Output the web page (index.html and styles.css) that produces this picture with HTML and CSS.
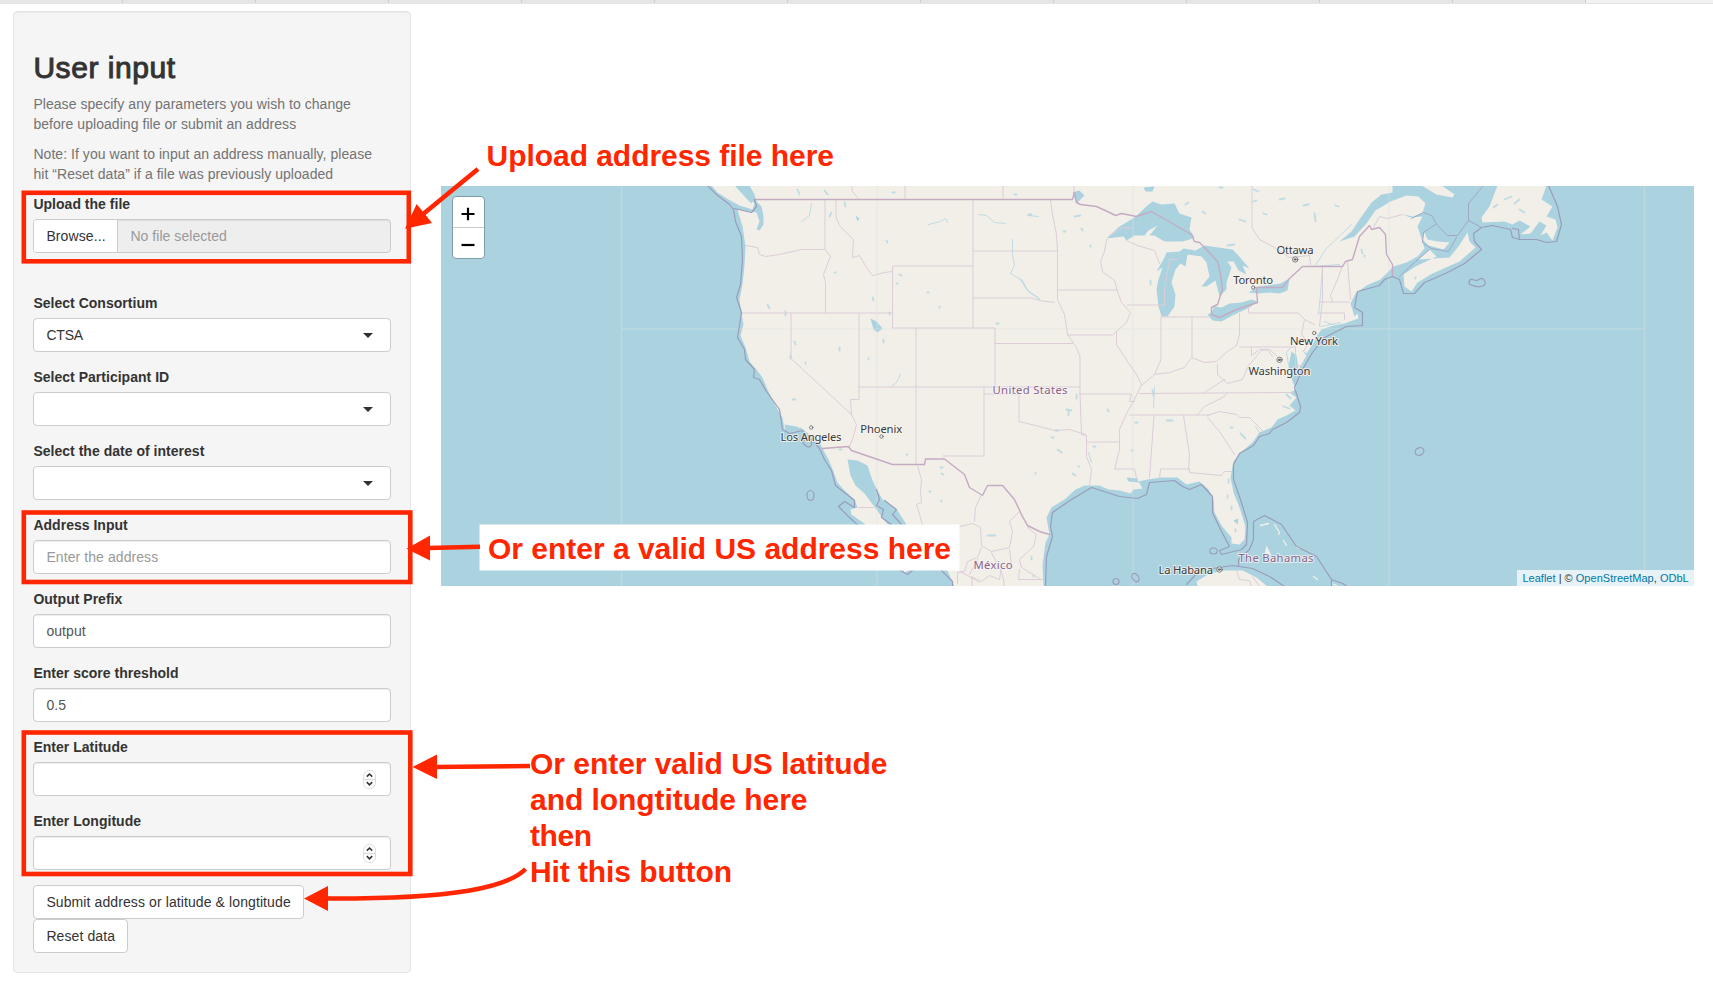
FILE: index.html
```html
<!DOCTYPE html>
<html lang="en">
<head>
<meta charset="utf-8">
<title>User input</title>
<link rel="stylesheet" href="styles.css">
</head>
<body>
<div class="tabs"><i></i><i></i><i></i><i></i><i></i><i></i><i></i><i></i><i></i><i></i><i></i><i></i><b></b></div>
<div class="page">
  <form class="well">
    <h2>User input</h2>
    <p class="help">Please specify any parameters you wish to change<br>before uploading file or submit an address</p>
    <p class="help">Note: If you want to input an address manually, please<br>hit “Reset data” if a file was previously uploaded</p>
    <div class="group file">
      <label>Upload the file</label>
      <div class="filebox"><span class="browse">Browse...</span><span class="filename">No file selected</span></div>
    </div>
    <div class="group"><label>Select Consortium</label><div class="control select"><span class="dark">CTSA</span></div></div>
    <div class="group"><label>Select Participant ID</label><div class="control select"></div></div>
    <div class="group"><label>Select the date of interest</label><div class="control select"></div></div>
    <div class="group"><label>Address Input</label><div class="control"><span class="placeholder">Enter the address</span></div></div>
    <div class="group"><label>Output Prefix</label><div class="control">output</div></div>
    <div class="group"><label>Enter score threshold</label><div class="control">0.5</div></div>
    <div class="group"><label>Enter Latitude</label><div class="control number"><svg class="spin" viewBox="0 0 13 19"><rect x=".5" y=".5" width="12" height="18" rx="5.5"/><path class="split" d="M1 9.5h11"/><path d="M3.8 6.6 6.5 4l2.7 2.6M3.8 12.2l2.7 2.6 2.7-2.6"/></svg></div></div>
    <div class="group"><label>Enter Longitude</label><div class="control number"><svg class="spin" viewBox="0 0 13 19"><rect x=".5" y=".5" width="12" height="18" rx="5.5"/><path class="split" d="M1 9.5h11"/><path d="M3.8 6.6 6.5 4l2.7 2.6M3.8 12.2l2.7 2.6 2.7-2.6"/></svg></div></div>
    <div class="buttons"><span class="btn submit">Submit address or latitude &amp; longtitude</span><span class="btn">Reset data</span></div>
  </form>

  <div class="map">
    <svg class="tiles" viewBox="441.5 186.5 1253 400.5" preserveAspectRatio="none">
      <g class="land">
        <path d="M712 186 718 193 729 200 740 206 753 210 755 204 749 198 742 192 735 186Z"/>
        <path d="M750 186 755 195 757 202 762 207 764 216 764 225 760 231 757 230 760 222 757 213 750 212 738 210 741 220 744 233 746 247 745 266 743 285 740 300 742 315 744 325 741 336 746 348 750 362 757 370 763 378 768 390 777 408 783 418 785 430 795 432 801 428 810 435 819 440 823 449 829 460 834 472 838 483 845 491 855 500 858 508 851 510 852 515 862 522 880 535 905 573 911 570 900 548 888 525 882 517 874 506 865 494 856 486 851 476 848 460 858 461 868 466 873 481 878 491 883 500 898 511 907 525 935 555 948 571 955 587H1044L1043 565 1046 543 1050 535 1047 518 1052 508 1065 500 1076 490 1085 486 1100 486 1109 490 1120 491 1131 494 1134 490 1143 489 1139 482 1148 480 1162 478 1178 478 1187 485 1200 482 1209 490 1214 500 1215 513 1222 526 1232 538 1232 544 1240 545 1245 540 1246 527 1240 508 1234 493 1231 478 1234 462 1240 454 1253 443 1260 433 1272 428 1278 420 1287 416 1296 411 1290 406 1297 398 1290 393 1297 390 1293 382 1289 367 1292 352 1297 356 1299 370 1307 356 1302 350 1307 354 1313 345 1317 337 1322 330 1334 326 1345 324 1359 319 1358 314 1355 317 1351 304 1356 294 1367 286 1381 280 1394 267 1407 263 1418 257 1425 249 1421 236 1418 227 1423 217 1411 218 1403 215 1414 217 1423 213 1426 204 1419 197 1407 196 1391 202 1376 211 1367 224 1355 237 1340 242 1352 232 1362 217 1372 203 1382 195 1393 193 1393 186Z"/>
        <path d="M1430 250 1419 260 1450 258 1459 247 1468 233 1470 242 1476 248 1460 262 1433 274 1418 283 1412 292 1405 287 1404 275 1416 267 1437 257ZM1425 233 1428 240 1438 242 1450 243 1444 250 1429 246 1423 240ZM1498 186 1490 207 1482 218 1483 223 1505 222 1513 225 1520 221 1531 227 1521 235 1531 234 1540 222 1547 226 1541 236 1547 233 1553 241 1558 228 1556 220 1547 217 1553 207 1542 200 1547 186ZM1422 186 1437 195 1453 198 1455 195 1442 186Z"/>
        <path d="M1198 587 1197 582 1210 574 1225 571 1243 571 1257 578 1268 587ZM1267 546 1272 556 1265 555Z"/>
        <path class="keys" d="M1261 526l8-2M1275 525l5 8-1 2M1284 541l3 5M1297 548l3 1M1314 577l4 3M1332 584l5 2"/>
      </g>
      <g class="water">
        <path d="M1107 239 1120 227 1135 218 1148 206 1153 202 1162 205 1175 204 1180 214 1192 218 1190 230 1195 238 1190 240 1183 242 1165 242 1155 236 1150 236 1158 226 1149 231 1145 236 1135 236 1127 241 1124 237Z"/>
        <path d="M1165 258 1157 272 1163 268 1159 280 1157 290 1159 307 1162 317 1168 317 1175 307 1176 295 1172 283 1176 270 1181 264 1186 267 1188 255 1202 257 1207 263 1210 277 1202 287 1207 287 1216 281 1220 297 1227 290 1227 283 1232 268 1228 262 1234 262 1239 271 1247 275 1243 266 1250 269 1238 255 1233 250 1205 246 1196 251 1184 249 1180 252 1167 253Z"/>
        <path d="M1208 315 1213 321 1222 322 1233 316 1250 308 1258 302 1252 300 1242 303 1230 304 1222 308 1215 307 1212 313ZM1249 293 1259 287 1281 284 1290 279 1288 291 1280 294 1270 293 1259 294Z"/>
        <path d="M871 319 877 322 883 329 878 333 874 330ZM736 187 747 190 755 198 752 204 746 198ZM856 216 860 219 858 222ZM1073 193 1080 191 1085 196 1077 204ZM1234 521 1239 519 1238 525ZM785 425 797 427 804 430 798 432 786 431ZM1127 478 1138 479 1139 483 1129 482ZM1144 188 1155 187 1153 192 1146 192Z"/>
        <path class="river" d="M1013 240v15l2 11-4 8 12 7 5 10 12 8M929 225l12-3 5-3 2 4M979 215l8 1 8 7 11 1M1028 216l11 1M1020 279l8 12 12 9M802 222l8-6 2-12M892 387l5-4 4-8M1155 388l-1 20M1323 267l-2 28-2 20M1340 265l-25 2 12-18 25-24M1289 365l-2-12 4-5M1260 433l-4-6M1092 463l-3-10M1321 327l20-4M1325 322l8 3"/>
        <path class="lakes" d="M832 213l-2 4M768 305l2 4M786 312v4M795 342l1 3M900 275l2 1M897 284h1M873 298l1 3M890 313v2M884 340v3M869 359v1M806 363v1M793 400h3M791 356v3M887 241l1 2M835 273h1M840 348v3M928 293h1M940 307v1M997 324h2M1075 217l6-1M1082 229l1 2M1091 246v1M1064 232h2M1151 281v4M1254 202l3-1M1264 214l3 1M1280 200l5-1M1304 206l5-1M1336 206l3 1M1315 214l1 8M1240 220l6 2M1228 246l7-1M1203 212l3 2M1186 205l3-2M1254 190l5 2M1220 188h3M893 193h2M1029 215h3M1015 195h2M825 191l3 4M845 203l1 4M798 190l2 5M741 223l2 6M1069 412v4M1056 431h3M1058 450l4 3M1073 474l3 2M1079 467h1M1036 473v1M1052 438h2M1132 451h1M1136 423h2M1153 391l1 5M1231 428h2M1241 434l5 5M1229 480v3M1228 496v2M1232 507v3M1236 530v2M941 468h2M942 474l2 1M942 501v1M930 492h1M988 536h8M1032 557v3M1034 576v1M907 455h1M840 450h2M1167 421h6M1077 395v4M1067 410l5 1M1094 447h2M1108 410l1 2M1365 256v1M1416 278v1M1505 200l7-3M1520 200l-5 4M1520 210l5 3M1498 205l-4 3M1362 250l1 4M1290 409l-6-2M1291 399l-4-4"/>
      </g>
      <g class="seams"><path d="M622 186V587M877.5 186V587M1133.5 186V587M1389.5 186V587M1645 186V587M622 329.3H1645"/></g>
      <g class="states">
        <path d="M746 246 758 248 760 255 766 257 780 255 802 250H825.5M825.500 200.500V250L831 257 824 275 826 283V313.500M742 313.500H893.500M836.500 200.500V217L840 226 854 240 853 258 860 256 867 268 873 276 885 273 893 272M893.500 266.500H973.500V328.500H893.500ZM973.500 200.500V266M973.500 251.500H1058M973.500 298.500H1032L1040 301 1055 303M916.500 328.500V465M973.500 328.500H995.500V387.500M859.500 313.500V400L851 400 852 415 857 425 853 440 850 447M791.500 313.500V359L852 415M859.500 387.500H1080M984.500 387.500V456.500H943.500M984.500 394.500H1019.500V422L1040 427 1055 431 1070 430 1086 435M995.500 344H1073M1051 200.500 1053 215 1057 235 1058 252V300L1065 315 1068 335 1077 348 1080.500 357V394L1082 435 1087 436V457L1092 470 1090 486M1058 290.500H1118M1068 335.500H1113L1117 332M1080 394.500H1132L1130 402H1135M1087 442.500H1119M1107 240 1105 252 1101 262 1103 272 1115 281 1118 292 1122 303 1131 313 1127 323 1117 332 1117 345 1128 362 1137 375 1142 385 1135 400 1128 412 1120 430V450L1115 469.500H1135L1137 479M1128 305.500H1166M1127 241 1138 246 1155 251 1160 264M1161.500 317.500V360L1155 375M1142 386 1155 375 1170 373 1185 368 1192 358 1205 363 1217 362 1228 352 1237 346 1240 335V314M1192.500 317.500V358M1162 317.500H1210M1240 347.500H1296M1249 308V313.500H1299L1305 320 1302 335 1309 343 1304 352M1305 320 1315 325M1218 365V375L1228 384 1243 380 1249 366 1262 351 1270 350 1277 356M1252 348V356L1260 350 1268 350 1273 357M1140 394 1293 393M1205 393 1225 380M1130 415.500H1210M1198 415 1205 407 1225 397 1228 393M1154.500 416 1150 478M1184 416 1190 455 1189 470M1160 479 1161 469.500H1190V473L1222 476 1225 472H1232M1208 418 1220 432 1235 455M1208 416 1220 412 1237 415 1240 418H1250L1263 431M1323 266V300L1320 327M1320 302.500H1350M1320 313.500H1345V320M1333 302 1331 296 1338 280 1343 266M1348 262 1351 300M1296 348V366H1303M1252.500 186V228L1260 240 1275 248 1290 258 1310 256 1311 265M1074.500 186V195M905.500 186V199M1003.500 186V199M852 186 853 192 859 199M1110 236 1123 228 1134 229M1178 260 1170 260 1165 290 1165 305"/>
        <path d="M918 466 922 480 921 492 922 503 917 505 923 525M859 508H874M960 527 973 524 981 528 982 546 992 552 1010 548 1013 532 1010 522 1020 512 1030 530 1037 535 1034 547 1020 560 1022 568 1040 579M981 497 976 508 975 522M982 548 978 558 968 562 965 572 958 573V584M978 560 970 575M1010 550 1012 565 1002 568 1000 580 990 576 982 582 972 577 973 587M992 553 1003 575 1005 587M1020 570 1019 580 1045 580M961 572 980 583M1237 571 1240 580 1250 581 1252 587M1253 577 1260 587M1374 228 1380 217 1388 219 1403 215"/>
      </g>
      <g class="country">
        <path d="M755 200H1073L1075 193 1077 203 1081 205 1097 207 1110 213 1116 216 1122 214 1137 217 1152 212 1192 235 1195 242 1200 243 1206 249 1218 262 1221 275 1223 290 1218 305 1212 308V315L1220 318 1237 310 1258 303 1257 288H1283L1290 279 1303 267H1343L1346 262 1353 260 1360 237 1370 226 1372 230 1380 228 1386 235 1387 255 1393 265V277M823 449 849 447 852 451 893 465H925L926 459.500H945L965 475 970 488 983 496 988 486 1003 486 1015 500 1022 515 1028 526 1040 532 1050 535"/>
      </g>
      <g class="sea">
        <path d="M708 186 717 195 730 205 734 210 736 222 742 237 743 260 741 285 737 298 742 313 738 338 745 350 746 360 755 370 754 378 760 380 767 392 780 410 783 430 790 434 803 431 806 438 812 440 820 449 825 460 832 471 836 486 855 501 855 508 845 502 839 507 850 518 863 530M735 209 752 213 757 207 755 200M901 571 908 575 914 570M942 571 953 582V587M877 490 880 500 877 506 884 510 882 518 892 525M885 501 897 510 893 515 902 525"/>
        <path d="M1558 207 1562 225 1557 242 1547 243 1537 240H1520L1513 238 1511 230 1493 226 1482 228 1474 234 1475 242 1482 250 1465 264 1450 272 1437 278 1425 283 1415 294 1404 294 1400 280 1393 277 1385 280 1380 286 1358 292 1355 308 1363 313V326L1347 327 1325 338 1313 353 1303 370 1295 388 1301 407 1300 413 1287 423 1273 430 1270 434 1260 437 1254 446 1240 454 1234 465 1234 480 1242 503 1248 523 1247 545 1242 550 1222 555 1220 551 1230 547 1221 530 1213 513 1213 497 1202 485 1190 490 1183 487 1175 481 1150 483 1147 495 1138 499 1120 497 1092 488 1072 500 1053 513 1051 527 1053 537 1047 557 1046 587M1558 207 1549 186M1513 229 1519 230 1520 240M1187 585 1200 571 1233 566 1253 569 1270 577 1285 587M1239 567V560L1250 550 1254 540V522L1265 516 1282 525 1297 547 1317 557 1332 580 1343 584 1348 587M1332 580V587"/>
        <path class="thin" d="M1483 187 1469 204V221L1482 228M1469 221 1458 236H1448L1438 226 1432 216 1424 213 1412 219M1436 225 1424 233 1423 243 1432 249 1449 252 1457 238M1430 250 1415 263 1400 277"/>
        <path d="M1470 281c2-3 4 0 7 0s5-5 8 0-4 7-8 6-9-1-7-6Z"/><ellipse cx="811" cy="496" rx="3.500" ry="5"/><ellipse cx="1420" cy="452" rx="4.500" ry="3.700" transform="rotate(-25 1420 452)"/><ellipse cx="1214" cy="551.500" rx="3.700" ry="3"/><circle cx="1116.500" cy="582" r="3"/><ellipse cx="1136" cy="578" rx="3" ry="4.500" transform="rotate(-35 1136 578)"/><path d="M804 440c3-3 7-1 8 3s-3 6-6 3-4-4-2-6"/>
      </g>
      <g class="dots"><circle cx="811.700" cy="428" r="1.700"/><circle cx="882" cy="437" r="1.700"/><circle cx="1253.700" cy="288" r="1.700"/><circle cx="1314.700" cy="333.500" r="1.700"/><circle cx="1295.700" cy="260" r="2.700"/><circle cx="1280" cy="360.300" r="2.700"/><circle cx="1220" cy="570" r="2.700"/><path d="M1295.200 260h1M1279.500 360.300h1M1219.500 570h1"/></g>
      <g class="places">
        <text x="781" y="441" textLength="61">Los Angeles</text><text x="860.700" y="433" textLength="42">Phoenix</text><text x="1277" y="254" textLength="37">Ottawa</text><text x="1233.700" y="284" textLength="40">Toronto</text><text x="1290.500" y="345.300" textLength="48">New York</text><text x="1249" y="375" textLength="62">Washington</text><text x="1159" y="574.500" textLength="54.500">La Habana</text>
        <g class="nation"><text x="993" y="394.300" textLength="75">United States</text><text x="974" y="569.300" textLength="39">México</text><text x="1239" y="562" textLength="75">The Bahamas</text></g>
      </g>
    </svg>
    <div class="zoom"><span><svg viewBox="0 0 14 14"><path d="M.5 7h13M7 .8v12.400"/></svg></span><span><svg viewBox="0 0 14 14"><path d="M.5 7h13"/></svg></span></div>
    <div class="credit"><a>Leaflet</a> | © <a>OpenStreetMap</a>, <a>ODbL</a></div>
  </div>
</div>

<svg class="notes" viewBox="0 0 1713 983">
  <rect class="plate" x="479.500" y="524.500" width="480" height="46"/>
  <g class="frame"><rect x="23.800" y="192.800" width="385" height="68.500"/><rect x="23.800" y="512.500" width="386.500" height="69.500"/><rect x="23.800" y="732.500" width="386.500" height="141.500"/></g>
  <g class="shaft"><path d="M478 169 422 215M480 546.700 428 548M530 766 435 767M525.500 869C508 887 457 899 326 898.500"/></g>
  <g class="head"><path d="M405 228.700 416.700 204 432 223ZM406.500 548.700 430 535.500V560.500ZM412.500 767 437 754.500V779ZM304 898.500 328 886V911Z"/></g>
  <text x="486.500" y="166.300" textLength="347.500">Upload address file here</text>
  <text x="488" y="558.700" textLength="463">Or enter a valid US address here</text>
  <text x="530" y="774.300" textLength="357.500">Or enter valid US latitude</text>
  <text x="530" y="810" textLength="277.500">and longtitude here</text>
  <text x="530" y="846" textLength="62">then</text>
  <text x="530" y="882" textLength="202">Hit this button</text>
</svg>
</body>
</html>
```
FILE: styles.css
```css
* { box-sizing: border-box; }
body { margin: 0; width: 1713px; height: 983px; overflow: hidden; position: relative; background: #fff; color: #333; font: 14px/20px "Liberation Sans", Arial, sans-serif; }
.tabs { display: flex; height: 4px; background: #e6e6e4; }
.tabs i { width: 133px; height: 3px; border-right: 1px solid #cfcfcd; }
.tabs i:first-child { width: 123px; }
.tabs b { flex: 1; height: 4px; background: #f2f2f1; border-bottom: 1px solid #e2e2e0; }
.page { display: flex; align-items: flex-start; gap: 30px; padding: 7.400px 0 0 13.400px; }
.well { width: 397.500px; height: 962px; margin: 0; padding: 19px; border: 1px solid #e5e5e5; border-radius: 4px; background: #f5f5f5; box-shadow: inset 0 1px 1px rgba(0,0,0,.05); }
h2 { margin: 20px 0 10px; font-size: 30px; line-height: 33px; font-weight: 400; letter-spacing: .55px; -webkit-text-stroke: 1px #333; }
.help { margin: 0 0 10px; color: #737373; white-space: nowrap; letter-spacing: .05px; }
.group { margin-bottom: 15px; }
.group.file { margin-bottom: 40px; }
label { display: block; margin-bottom: 5px; font-weight: 700; letter-spacing: .02px; }
.control { display: flex; align-items: center; justify-content: space-between; height: 34px; padding: 0 12px; border: 1px solid #ccc; border-radius: 4px; background: #fff; box-shadow: inset 0 1px 1px rgba(0,0,0,.075); color: #555; letter-spacing: .08px; }
.dark { color: #333; letter-spacing: -.2px; }
.placeholder { color: #999; }
.select { padding-right: 17px; box-shadow: none; }
.select::after { content: ""; margin-left: auto; border: 5px solid transparent; border-top-color: #333; border-bottom: 0; }
.number { justify-content: flex-end; padding-right: 14px; }
.spin { width: 13px; height: 19px; fill: #fff; stroke: #333; stroke-width: 1.600; }
.spin rect { stroke: #ddd; stroke-width: 1; }
.spin .split { stroke: #ddd; stroke-width: 1.500; }
.filebox { display: flex; height: 34px; border: 1px solid #ccc; border-radius: 4px; background: #eee; overflow: hidden; line-height: 32px; box-shadow: inset 0 1px 1px rgba(0,0,0,.075); }
.browse { width: 84px; padding-left: 12px; background: #fff; border-right: 1px solid #ccc; letter-spacing: .1px; }
.filename { padding-left: 12px; color: #999; letter-spacing: .05px; }
.buttons { display: flex; flex-direction: column; align-items: flex-start; }
.btn { height: 34px; padding: 0 12px; border: 1px solid #ccc; border-radius: 4px; background: #fff; line-height: 32px; white-space: nowrap; letter-spacing: .1px; }
.map { position: relative; width: 1253px; height: 400.500px; margin-top: 174.600px; background: #aad3df; overflow: hidden; }
.tiles { display: block; width: 100%; height: 100%; fill: none; stroke-linejoin: round; stroke-linecap: round; }
.land { fill: #f2efe9; }
.keys { fill: none; stroke: #f2efe9; stroke-width: 1.300; }
.water { fill: #aad3df; }
.water .river { fill: none; stroke: #aad3df; stroke-width: 1; opacity: .7; }
.water .lakes { fill: none; stroke: #aad3df; stroke-width: 1.800; opacity: .7; }
.seams { stroke: #dce4e0; stroke-width: 1.300; opacity: .4; }
.states { stroke: #dccdd9; stroke-width: 1; }
.country { stroke: #c4abc3; stroke-width: 1.400; }
.sea { stroke: #9a9cbb; stroke-width: 1.200; }
.sea .thin { stroke-width: .8; }
.dots { fill: #f2efe9; stroke: #666; stroke-width: .8; }
.dots path { stroke-width: 2.200; }
.places { font: 11.300px "Noto Sans", sans-serif; fill: #3a3a3a; stroke: #f7f5f2; stroke-opacity: .8; stroke-width: 2px; paint-order: stroke; }
.nation { fill: #8a648c; }
.zoom { position: absolute; left: 11px; top: 10.500px; width: 33px; height: 63px; border: 1.500px solid #7e9da6; border-radius: 4px; background: #fff; display: flex; flex-direction: column; }
.zoom span { flex: 1; display: flex; align-items: center; justify-content: center; padding-top: 3px; }
.zoom span + span { border-top: 1px solid #ccc; }
.zoom svg { width: 14px; height: 14px; stroke: #000; stroke-width: 2.200; }
.credit { position: absolute; right: 0; bottom: 0; width: 176.500px; height: 16.500px; padding-left: 5px; background: rgba(255,255,255,.7); font-size: 11px; line-height: 17px; white-space: nowrap; color: #333; letter-spacing: .02px; }
.credit a { color: #0078a8; }
.notes { position: absolute; inset: 0; width: 1713px; height: 983px; pointer-events: none; fill: #ff2600; font: 700 30px "Liberation Sans", Arial, sans-serif; }
.plate { fill: #fff; }
.frame { fill: none; stroke: #ff2600; stroke-width: 4.600; }
.shaft { fill: none; stroke: #ff2600; stroke-width: 4.600; }
```
